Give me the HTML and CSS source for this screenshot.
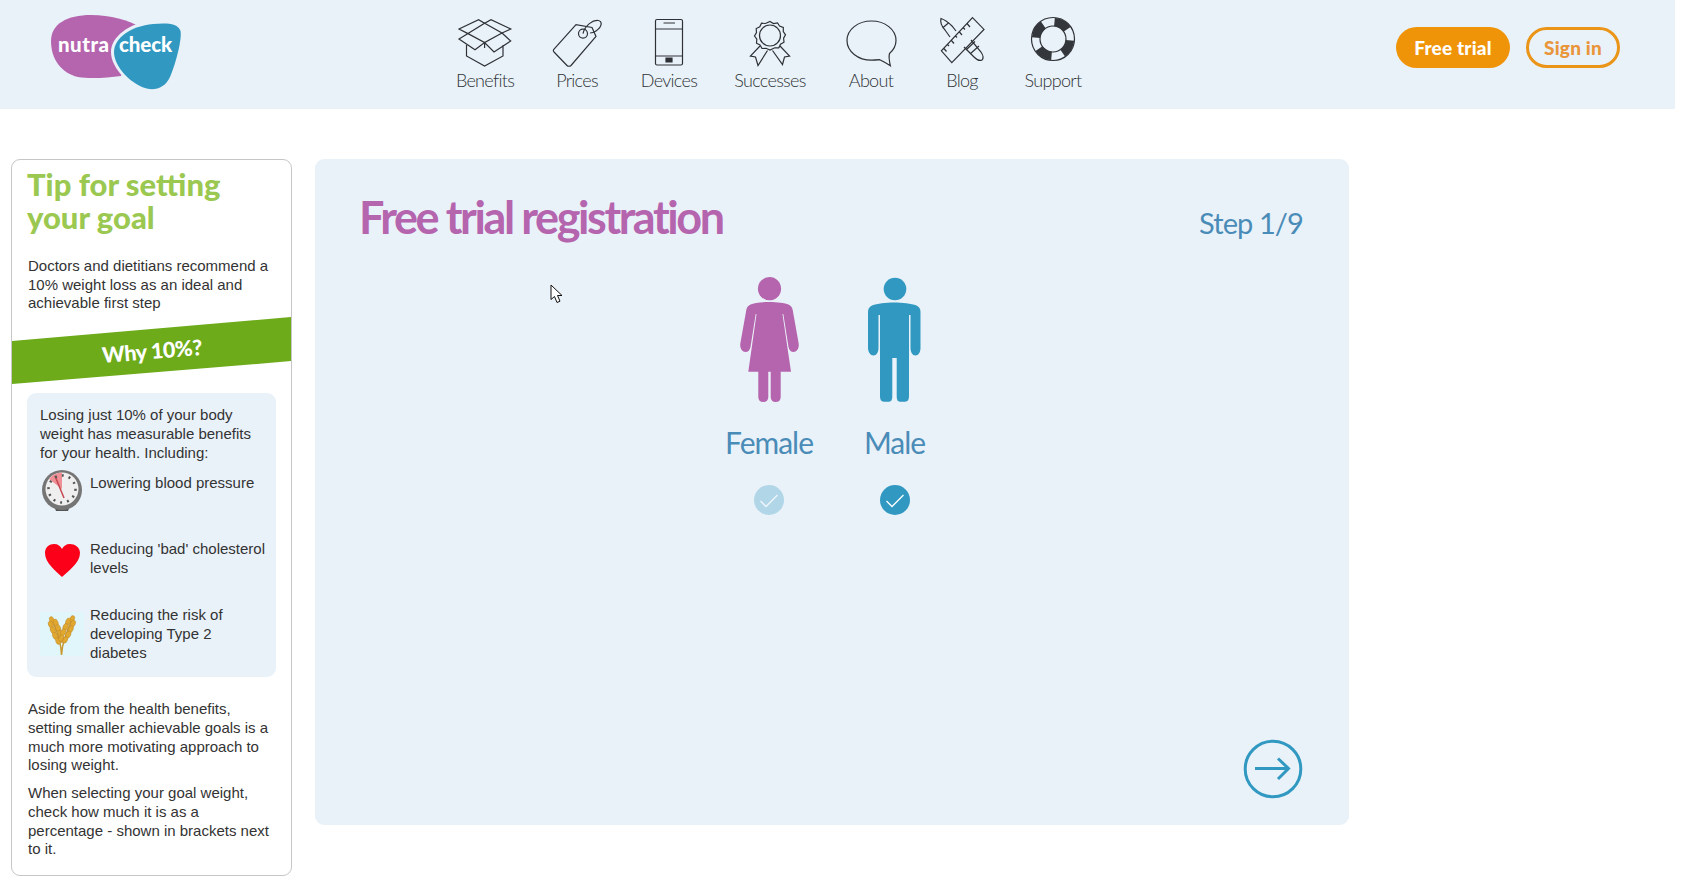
FILE: index.html
```html
<!DOCTYPE html>
<html lang="en">
<head>
<meta charset="utf-8">
<title>Free trial registration - Nutracheck</title>
<link rel="stylesheet" href="styles.css">
</head>
<body>
<div class="page">
  <header class="header">
    <a class="logo" href="#">
      <svg class="logo-svg" viewBox="0 0 130 74">
        <path class="logo-purple" d="M0 26C0 9 16 0 40 0C60 0 76 5 92 13L70 61C56 63 38 64 27 62C10 58 0 44 0 26Z"/>
        <path class="logo-edge" d="M60 37C60 22 78 8 100 6C116 4.500 128 5.500 131 14C133 22 128 45 121 63C117 73 108 77 98 76C80 73 60 54 60 37Z"/>
        <path class="logo-blue" d="M63 37C63 23 80 11 102 9C116 7.800 127 8.300 129.500 16C131 23 126 45 119 62C115 71 107 75 98 74C81 71 63 52 63 37Z"/>
        <text class="logo-text logo-nutra" x="7" y="37">nutra</text>
        <text class="logo-text" x="68" y="37">check</text>
      </svg>
    </a>
    <nav class="nav">
      <a class="nav-item" href="#">
        <svg class="nav-icon" viewBox="0 0 60 50"><path d="M11.500 26V37L29.600 47L48 37V26M13 14.600L29.600 4.300L47 14L29.600 23.600ZM13 14.600L4 10L23.600 .7L29.600 4.300L36 .7L55.700 10L47 14M13 14.600L4 20L20 30.700L29.600 23.600L39 33L55.700 22L47 14M29.600 23.600V29"/></svg>
        <span class="nav-label">Benefits</span>
      </a>
      <a class="nav-item" href="#">
        <svg class="nav-icon" viewBox="0 0 60 50"><path d="M6.600 30.700L29 5.700L45 8.500L49 17.500L24 46.500C23 47.500 21 47.500 20 46.500L7 33C6 32 6 31.500 6.600 30.700Z"/><circle cx="36" cy="14.600" r="4.500"/><path d="M36 14.600C38 6 46 1 51 1.500C56 2 55 8 49 12C47 13.500 45 14 43 14"/></svg>
        <span class="nav-label">Prices</span>
      </a>
      <a class="nav-item" href="#">
        <svg class="nav-icon" viewBox="0 0 60 50"><rect x="16.500" y=".5" width="27" height="45.500" rx="1.500"/><path d="M24.500 4H36M16.500 10H43.500M16.500 37H43.500"/><path class="fill-dark" d="M27 39H33V43H27Z"/></svg>
        <span class="nav-label">Devices</span>
      </a>
      <a class="nav-item" href="#">
        <svg class="nav-icon" viewBox="0 0 60 50"><path d="M30 2.500L33.500 4.500L37.500 3.800L39.500 7L43.300 8.500L43.300 12.500L45.500 15.800L43.600 19.200L44 23.200L40.500 25.200L38.800 28.800L34.800 28.800L30 31L26 29.300L22 29.500L20 26L16.500 24.200L16.800 20.200L14.500 17L16.500 13.500L16.200 9.500L19.800 7.800L21.500 4.200L25.500 4.500Z"/><circle cx="30" cy="16.500" r="10.500"/><path d="M20 27L10.400 37L15.500 38L18 46.500L27.500 31.500M40 27L49.600 37L44.500 38L42.500 45.500L32.500 31.500"/></svg>
        <span class="nav-label">Successes</span>
      </a>
      <a class="nav-item" href="#">
        <svg class="nav-icon" viewBox="0 0 60 50"><path d="M30.500 2C44 2 55 10.500 55 21.500C55 26.500 52.500 31 48.500 34.500C47.500 38 48.500 43 49.400 46.800C46 44.500 42 42.500 38.600 40.700C36 41 33.500 41.200 30.500 41.200C17 41.200 6 32.500 6 21.500C6 10.500 17 2 30.500 2Z"/></svg>
        <span class="nav-label">About</span>
      </a>
      <a class="nav-item" href="#">
        <svg class="nav-icon nav-icon-over" viewBox="0 0 60 50"><path d="M40.500 -1.400L52 10.400L19.800 43.600L9.400 31.800ZM35 4.500L38 8M31 8.500L33 10.500M27 12.500L30 16M23 16.500L25 18.500M19 21L22 24.500M15 25L17 27M11.500 29L14.500 32.500"/><path d="M24 12L20 7C16 3 12 .5 9 -.5C8 3 9.500 7 13 11L18 18M10.500 9L17 3.500M32 28L42 38C45 41 48 42 50 41C52 39 51 36 49 33L39 21M34 31L43 22.500M38 35L47 27"/></svg>
        <span class="nav-label">Blog</span>
      </a>
      <a class="nav-item" href="#">
        <svg class="nav-icon nav-icon-over" viewBox="0 0 60 50"><circle cx="30" cy="20" r="21.500"/><circle cx="30" cy="20" r="13"/><circle class="buoy" cx="30" cy="20" r="17" pathLength="100"/></svg>
        <span class="nav-label">Support</span>
      </a>
    </nav>
    <div class="actions">
      <a class="btn btn-solid" href="#">Free trial</a>
      <a class="btn btn-outline" href="#">Sign in</a>
    </div>
  </header>

  <main class="content">
    <aside class="tip">
      <h2 class="tip-title">Tip for setting your goal</h2>
      <p class="tip-text tip-intro">Doctors and dietitians recommend a 10% weight loss as an ideal and achievable first step</p>
      <div class="band"><span class="band-text">Why 10%?</span></div>
      <div class="benefits">
        <p class="benefits-intro">Losing just 10% of your body weight has measurable benefits for your health. Including:</p>
        <ul class="benefit-list">
          <li class="benefit">
            <svg class="benefit-icon" viewBox="0 0 44 44">
              <path d="M14 38H30L28 43H16Z" fill="#555"/>
              <circle cx="22" cy="22" r="20" fill="#757575"/>
              <circle cx="22" cy="21" r="16.500" fill="#efefef"/>
              <path d="M22 21L9 11A17 17 0 0 1 22 4.500Z" fill="#ef8f96"/>
              <path d="M15 8L24 30" stroke="#c4474f" stroke-width="1.500"/>
              <circle cx="22" cy="21" r="13.500" fill="none" stroke="#555" stroke-width="2.500" stroke-dasharray="2 5"/>
            </svg>
            <span>Lowering blood pressure</span>
          </li>
          <li class="benefit">
            <svg class="benefit-icon" viewBox="0 0 44 44">
              <path d="M22 41C16 35 5 27 5 17C5 11 9.500 8 14 8C18 8 20.500 10 22 13C23.500 10 26 8 30 8C34.500 8 40 11 40 17C40 27 28 35 22 41Z" fill="#fb0018"/>
            </svg>
            <span>Reducing 'bad' cholesterol levels</span>
          </li>
          <li class="benefit">
            <svg class="benefit-icon wheat" viewBox="0 0 44 44">
              <path d="M21.500 43C21 34 20 26 12 8M21.500 43C22 34 24 24 33 6" stroke="#c9982f" stroke-width="1.500" fill="none"/>
              <g fill="#e0a82e" stroke="#b9802a" stroke-width=".4">
                <g transform="translate(11 6) rotate(-22)">
                  <ellipse cx="0" cy="2" rx="2.200" ry="3.400"/><ellipse cx="-2.600" cy="6" rx="2.400" ry="3.600"/><ellipse cx="2.600" cy="6" rx="2.400" ry="3.600"/><ellipse cx="-2.800" cy="12" rx="2.500" ry="3.700"/><ellipse cx="2.800" cy="12" rx="2.500" ry="3.700"/><ellipse cx="-2.800" cy="18" rx="2.500" ry="3.700"/><ellipse cx="2.800" cy="18" rx="2.500" ry="3.700"/><ellipse cx="-2.200" cy="24" rx="2.200" ry="3.500"/><ellipse cx="2.200" cy="24" rx="2.200" ry="3.500"/>
                </g>
                <g transform="translate(33 5) rotate(24)">
                  <ellipse cx="0" cy="2" rx="2.200" ry="3.400"/><ellipse cx="-2.600" cy="6" rx="2.400" ry="3.600"/><ellipse cx="2.600" cy="6" rx="2.400" ry="3.600"/><ellipse cx="-2.800" cy="12" rx="2.500" ry="3.700"/><ellipse cx="2.800" cy="12" rx="2.500" ry="3.700"/><ellipse cx="-2.800" cy="18" rx="2.500" ry="3.700"/><ellipse cx="2.800" cy="18" rx="2.500" ry="3.700"/><ellipse cx="-2.200" cy="24" rx="2.200" ry="3.500"/><ellipse cx="2.200" cy="24" rx="2.200" ry="3.500"/>
                </g>
              </g>
            </svg>
            <span>Reducing the risk of developing Type 2 diabetes</span>
          </li>
        </ul>
      </div>
      <p class="tip-text tip-after">Aside from the health benefits, setting smaller achievable goals is a much more motivating approach to losing weight.</p>
      <p class="tip-text tip-last">When selecting your goal weight, check how much it is as a percentage - shown in brackets next to it.</p>
    </aside>

    <section class="panel">
      <div class="panel-head">
        <h1 class="panel-title">Free trial registration</h1>
        <span class="step">Step 1/9</span>
      </div>
      <div class="choices">
        <div class="choice">
          <svg class="figure" viewBox="-1 0 60 126">
            <circle class="fig-purple" cx="29.500" cy="11.700" r="11.600"/>
            <path class="fig-purple" d="M29.500 25C22 25 14 26 10.500 27.500C7.500 29 6.700 31 6.300 33L.4 66C-.5 71 2 75 5.500 75C8 75 10 73 10.500 70L15.700 37H16.500L8.300 94.700H18.300V120C18.300 123 20 125 23.300 125C26.500 125 28.300 123 28.300 120V94.700H30.700V120C30.700 123 32.500 125 35.700 125C39 125 40.700 123 40.700 120V94.700H51L42.500 37H43.300L48.500 70C49 73 51 75 53.500 75C57 75 59.500 71 58.600 66L52.700 33C52.300 31 51.500 29 48.500 27.500C45 26 37 25 29.500 25Z"/>
          </svg>
          <span class="choice-label">Female</span>
          <svg class="tick tick-off" viewBox="0 0 30 30"><circle cx="15" cy="15" r="15"/><path d="M6.500 16L12 21.500L23.500 10"/></svg>
        </div>
        <div class="choice">
          <svg class="figure" viewBox="1 0 60 126">
            <circle class="fig-blue" cx="31" cy="12" r="11.300"/>
            <path class="fig-blue" d="M30 25.500C22 25.500 13 26.500 8 28.500C5 30 4 32 4 35V71C4 75 6.500 78.500 9.500 78.500C12.500 78.500 14.500 75 14.500 71V38H16V119C16 122.500 17 124.700 20 124.700H25C27.500 124.700 28.300 122.500 28.300 119V81H32.700V119C32.700 122.500 33.500 124.700 36 124.700H41C44 124.700 45 122.500 45 119V38H46.500V71C46.500 75 48.500 78.500 51.500 78.500C54.500 78.500 56.500 75 56.500 71V35C56.500 32 55.500 30 52.500 28.500C47.500 26.500 38 25.500 30 25.500Z"/>
          </svg>
          <span class="choice-label choice-label-male">Male</span>
          <svg class="tick" viewBox="0 0 30 30"><circle cx="15" cy="15" r="15"/><path d="M6.500 16L12 21.500L23.500 10"/></svg>
        </div>
      </div>
      <a class="next" href="#" aria-label="Next">
        <svg class="next-icon" viewBox="0 0 60 60"><circle cx="30" cy="30" r="27.800"/><path d="M12 29.500H45M35 19.500L45.500 29.500L35 40"/></svg>
      </a>
    </section>
  </main>

  <svg class="cursor" viewBox="0 0 13 20"><path d="M1 1V15.500L4.500 12.500L7 18.500L10 17.200L7.500 11.500H12Z"/></svg>
</div>
</body>
</html>
```

FILE: styles.css
```css
* { box-sizing: border-box; }
html, body { margin: 0; padding: 0; background: #fff; }
body { font-family: "Liberation Sans", Arial, sans-serif; color: #333; overflow: hidden; }
a { text-decoration: none; color: inherit; }
h1, h2, p, ul { margin: 0; padding: 0; }
ul { list-style: none; }

.page { position: relative; width: 1675px; height: 887px; }

.header { display: flex; align-items: flex-start; height: 109px; background: #eaf2f9; }
.logo { display: block; margin: 15px 0 0 51px; width: 130px; height: 74px; }
.logo-svg { display: block; width: 130px; height: 74px; overflow: visible; }
.logo-purple { fill: #b565ae; }
.logo-edge { fill: #eaf2f9; }
.logo-blue { fill: #3199c1; }
.logo-text { font-family: Lato, sans-serif; font-weight: 900; font-size: 20.500px; fill: #fff; letter-spacing: -.1px; }
.logo-nutra { letter-spacing: .5px; }

.nav { display: flex; margin: 19px 0 0 258px; }
.nav-item { display: flex; flex-direction: column; align-items: center; width: 92px; color: #2e3236; }
.nav-item:nth-child(4) { width: 110px; }
.nav-item:nth-child(6) { width: 90px; }
.nav-icon { display: block; width: 60px; height: 50px; fill: none; stroke: #2e3236; stroke-width: 1.200; overflow: visible; }
.fill-dark { fill: #2e3236; }
.buoy { fill: none; stroke: #33373b; stroke-width: 8.500; stroke-dasharray: 14 11; transform: rotate(-85deg); transform-origin: 30px 20px; }
.nav-label { margin-top: -1px; font-family: Lato, sans-serif; font-weight: 300; font-size: 18px; line-height: 24px; letter-spacing: -.7px; }

.actions { display: flex; gap: 16px; margin: 27px 55px 0 auto; }
.btn { display: flex; align-items: center; justify-content: center; height: 41px; border-radius: 21px; font-family: Lato, sans-serif; font-weight: 900; font-size: 19px; letter-spacing: .2px; }
.btn-solid { width: 114px; background: #ef9409; color: #fff; }
.btn-outline { width: 94px; border: 3px solid #ea9518; color: #e9953a; }

.content { display: flex; align-items: flex-start; gap: 23px; padding: 50px 0 0 11px; }

.tip { width: 281px; height: 717px; flex: none; border: 1px solid #c6c6c6; border-radius: 9px; background: #fff; overflow: hidden; }
.tip-title { margin: 8px 20px 0 15px; font-family: Lato, sans-serif; font-weight: 900; font-size: 31px; line-height: 33px; color: #9bc850; }
.tip-text { font-size: 15px; line-height: 18.700px; margin-left: 16px; margin-right: 18px; color: #333; }
.tip-intro { margin-top: 23px; }
.band { display: flex; align-items: center; justify-content: center; height: 67px; margin-top: 4px; background: #6dab1a; clip-path: polygon(0 24px, 100% 0, 100% 44px, 0 67px); }
.band-text { display: block; font-family: Lato, sans-serif; font-weight: 900; font-size: 21.500px; letter-spacing: -.4px; color: #fff; transform: rotate(-4.700deg); }

.benefits { margin: 9px 15px 0; padding: 13px 10px 15px 13px; background: #eaf2f9; border-radius: 9px; font-size: 15px; line-height: 18.700px; }
.benefit-list { margin-top: 12px; }
.benefit { display: flex; gap: 6px; min-height: 66px; }
.benefit-icon { display: block; flex: none; width: 44px; height: 44px; margin-top: -6px; }
.benefit:last-child { min-height: 56px; }
.benefit:last-child .benefit-icon { margin-top: 6px; }
.benefit:nth-child(2) .benefit-icon { margin-top: -4px; }
.wheat { background: #e0f6fa; }

.tip-after { margin-top: 23px; }
.tip-last { margin-top: 9px; }

.panel { display: flex; flex-direction: column; width: 1034px; height: 666px; padding: 0 46px 26px 44px; background: #eaf2f9; border-radius: 9px; }
.panel-head { display: flex; align-items: baseline; justify-content: space-between; padding-top: 28px; }
.panel-title { font-family: Lato, sans-serif; font-weight: 700; font-size: 45px; line-height: 60px; letter-spacing: -2.400px; color: #b565ae; }
.step { font-family: Lato, sans-serif; font-weight: 400; font-size: 29px; letter-spacing: -.9px; color: #4a8cb8; }

.choices { display: flex; justify-content: center; margin: 30px 0 0 2px; }
.choice { display: flex; flex-direction: column; align-items: center; width: 126px; }
.figure { display: block; width: 60px; height: 126px; overflow: visible; }
.fig-purple { fill: #b565ae; }
.fig-blue { fill: #3199c1; }
.choice-label { margin-top: 20px; font-family: Lato, sans-serif; font-weight: 400; font-size: 30px; line-height: 38px; letter-spacing: -1px; color: #4a8cb8; }
.choice-label-male { margin-left: -1px; }
.tick { display: block; width: 30px; height: 30px; margin-top: 24px; }
.tick circle { fill: #3199c1; }
.tick path { fill: none; stroke: #fff; stroke-width: 1.300; }
.tick-off { opacity: .3; }

.next { display: block; align-self: flex-end; margin-top: auto; width: 60px; height: 60px; }
.next-icon { display: block; width: 60px; height: 60px; fill: none; stroke: #3199c1; stroke-width: 3; }

.cursor { position: absolute; left: 550px; top: 284px; width: 13px; height: 20px; fill: #fff; stroke: #111; stroke-width: 1; }
```
